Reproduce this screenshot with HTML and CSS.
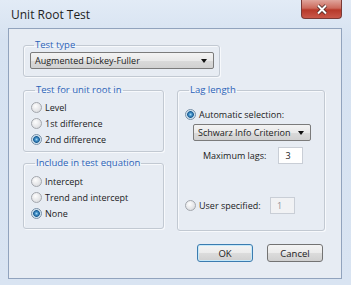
FILE: index.html
```html
<!DOCTYPE html>
<html lang="en">
<head>
  <meta charset="UTF-8">
  <title>Unit Root Test</title>
  <link rel="stylesheet" href="styles.css">
</head>
<body>
  <div class="window">
    <div class="titlebar">
      <span class="title">Unit Root Test</span>
      <button class="close" type="button" aria-label="Close">
        <svg width="14" height="11" viewBox="0 0 14 11">
          <path class="x-shadow" d="M3 1.5 L11 9.5 M11 1.5 L3 9.5" />
          <path class="x-line" d="M3 1.5 L11 9.5 M11 1.5 L3 9.5" />
        </svg>
      </button>
    </div>

    <div class="client">
      <fieldset class="group test-type">
        <legend>Test type</legend>
        <div class="combo"><span>Augmented Dickey-Fuller</span><i class="arrow"></i></div>
      </fieldset>

      <div class="columns">
        <div class="col-left">
          <fieldset class="group unit-root">
            <legend>Test for unit root in</legend>
            <label class="radio"><span class="dot"></span>Level</label>
            <label class="radio"><span class="dot"></span>1st difference</label>
            <label class="radio"><span class="dot on"></span>2nd difference</label>
          </fieldset>
          <fieldset class="group equation">
            <legend>Include in test equation</legend>
            <label class="radio"><span class="dot"></span>Intercept</label>
            <label class="radio"><span class="dot"></span>Trend and intercept</label>
            <label class="radio"><span class="dot on"></span>None</label>
          </fieldset>
        </div>

        <fieldset class="group lag">
          <legend>Lag length</legend>
          <label class="radio"><span class="dot on"></span>Automatic selection:</label>
          <div class="combo small"><span>Schwarz Info Criterion</span><i class="arrow"></i></div>
          <div class="field max-lags">
            <span>Maximum lags:</span>
            <span class="input">3</span>
          </div>
          <div class="field user">
            <label class="radio"><span class="dot"></span>User specified:</label>
            <span class="input disabled">1</span>
          </div>
        </fieldset>
      </div>

      <div class="buttons">
        <button class="btn default" type="button">OK</button>
        <button class="btn" type="button">Cancel</button>
      </div>
    </div>
  </div>
</body>
</html>
```

FILE: styles.css
```css
body {
  margin: 0;
  font-family: "Open Sans", "Noto Sans", sans-serif;
  font-size: 9px;
  color: #1b1b1b;
  background: #dfe8f4;
}
.window {
  width: 351px;
  height: 285px;
  background: linear-gradient(#e2ebf6, #d6e2f1 40px, #d9e4f2);
  overflow: hidden;
}
.titlebar {
  height: 28px;
  display: flex;
  align-items: flex-start;
  justify-content: space-between;
  padding-left: 11px;
  padding-right: 9px;
}
.title {
  font-size: 12px;
  color: #1e1e1e;
  margin-top: 6px;
}
.close {
  width: 41px;
  height: 19px;
  padding: 0;
  border: 1px solid #7a3a36;
  border-top: none;
  border-radius: 0 0 4px 4px;
  background: linear-gradient(#e0a59c, #cc6a5c 45%, #b7392a 55%, #c9584a);
  display: flex;
  align-items: center;
  justify-content: center;
}
.close .x-shadow {
  stroke: #4a2420;
  stroke-width: 3.6;
  fill: none;
}
.close .x-line {
  stroke: #fff;
  stroke-width: 2;
  fill: none;
}

.client {
  margin-left: 8px;
  width: 334px;
  height: 251px;
  box-sizing: border-box;
  border: 1px solid #91a3bd;
  background: #e7ecf3;
  padding: 10px 15px 0 14px;
}
.group {
  margin: 0;
  border: 1px solid #c2c9d2;
  border-radius: 3px;
  box-shadow: inset 1px 1px 0 #f7f9fc, 1px 1px 0 #f7f9fc;
  box-sizing: border-box;
}
.group legend {
  color: #2c63b8;
  padding: 0 1px;
  margin-left: 4px;
  line-height: 12px;
  font-size: 9.5px;
}
.test-type {
  width: 197px;
  padding: 1px 5px 7px 6px;
}

.combo {
  height: 17px;
  box-sizing: border-box;
  border: 1px solid #7b7b7b;
  border-radius: 2px;
  background: linear-gradient(#f3f3f3, #e9e9e9 50%, #dadada 51%, #d1d1d1);
  display: flex;
  align-items: center;
  justify-content: space-between;
  padding: 0 6px 0 4px;
}
.combo.small {
  width: 118px;
  margin: 2px 0 0 8px;
}
.arrow {
  width: 0;
  height: 0;
  border-left: 3.5px solid transparent;
  border-right: 3.5px solid transparent;
  border-top: 4px solid #111;
}

.columns {
  display: flex;
  gap: 13px;
  margin-top: 7px;
}
.col-left {
  width: 141px;
  display: flex;
  flex-direction: column;
  gap: 5px;
}
.unit-root {
  padding: 3px 6px 4px 7px;
}
.equation {
  padding: 4px 6px 7px 7px;
}
.lag {
  width: 148px;
  height: 147px;
  padding: 10px 6px 0 7px;
}

.radio {
  display: flex;
  align-items: center;
  height: 16px;
  gap: 3px;
}
.dot {
  width: 11px;
  height: 11px;
  box-sizing: border-box;
  border-radius: 50%;
  border: 1px solid #a3a7ad;
  background: radial-gradient(circle at 40% 35%, #fdfdfd, #dfe0e3 70%, #cdcfd3);
}
.dot.on {
  border-color: #7890a8;
  background: radial-gradient(circle, #a6d8f3 0, #3f8ec7 1.6px, #1d5d93 3px, #c4dcec 3.7px, #eef3f7 5px);
}

.field {
  display: flex;
  align-items: center;
}
.max-lags {
  margin: 6px 0 0 18px;
  gap: 12px;
}
.user {
  margin-top: 33px;
  gap: 0;
}
.user .radio {
  width: 85px;
}
.input {
  width: 25px;
  height: 17px;
  box-sizing: border-box;
  border: 1px solid #c9ced6;
  background: #fff;
  padding: 2px 0 0 6px;
  line-height: 12px;
}
.input.disabled {
  background: #f1f2f4;
  color: #8d9096;
}

.buttons {
  display: flex;
  justify-content: flex-end;
  gap: 14px;
  margin-top: 13px;
  padding-right: 3px;
}
.btn {
  width: 56px;
  height: 18px;
  padding: 0;
  font-family: inherit;
  font-size: 9.5px;
  color: #1b1b1b;
  border: 1px solid #737373;
  border-radius: 3px;
  background: linear-gradient(#f4f4f4, #ebebeb 50%, #dcdcdc 51%, #d0d0d0);
}
.btn.default {
  border-color: #3b7cb0;
  box-shadow: inset 0 0 0 1px #c6e8f8;
}
```
